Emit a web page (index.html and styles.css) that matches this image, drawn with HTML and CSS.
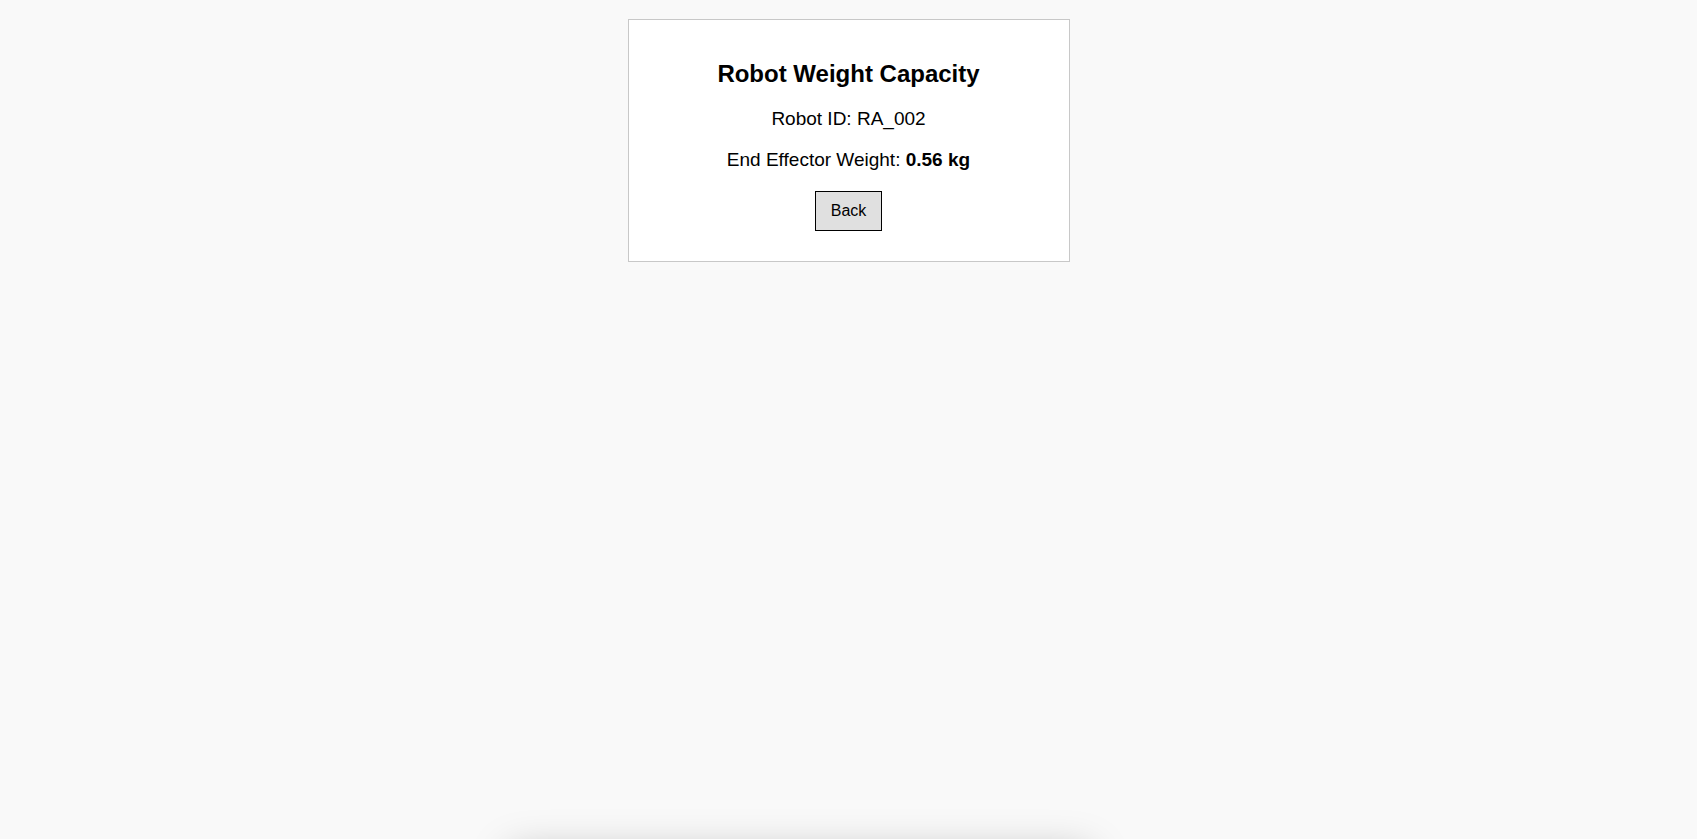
FILE: index.html
```html
<!DOCTYPE html>
<html lang="en">
<head>
<meta charset="utf-8">
<title>Robot Weight Capacity</title>
<link rel="stylesheet" href="styles.css">
</head>
<body>
<div class="card">
  <h2 class="title">Robot Weight Capacity</h2>
  <p class="line">Robot ID: RA_002</p>
  <p class="line">End Effector Weight: <strong>0.56 kg</strong></p>
  <div class="actions"><button class="back" type="button">Back</button></div>
</div>
<div class="offscreen"></div>
</body>
</html>
```
FILE: styles.css
```css
html, body {
  margin: 0;
  padding: 0;
}
body {
  background: #f9f9f9;
  font-family: "Liberation Sans", Arial, sans-serif;
  color: #000;
  padding: 19px 0;
  min-height: 100vh;
  box-sizing: border-box;
  overflow: hidden;
}
.card {
  width: 400px;
  margin: 0 auto;
  padding: 20px;
  background: #fff;
  border: 1px solid #c8c8c8;
  text-align: center;
}
.title {
  font-size: 24px;
  font-weight: bold;
  margin: 20px 0;
}
.line {
  font-size: 19px;
  margin: 19px 0;
}
.actions {
  margin-top: 20px;
  margin-bottom: 10px;
}
.back {
  font-family: "Liberation Sans", Arial, sans-serif;
  font-size: 16px;
  padding: 10px 15px;
  background: #e0e0e0;
  border: 1px solid #000;
  border-radius: 0;
  color: #000;
  margin: 0;
}
.offscreen {
  position: fixed;
  left: 510px;
  width: 580px;
  top: 852px;
  height: 60px;
  background: #fff;
  box-shadow: 0 0 40px rgba(0, 0, 0, 0.25);
}
```
